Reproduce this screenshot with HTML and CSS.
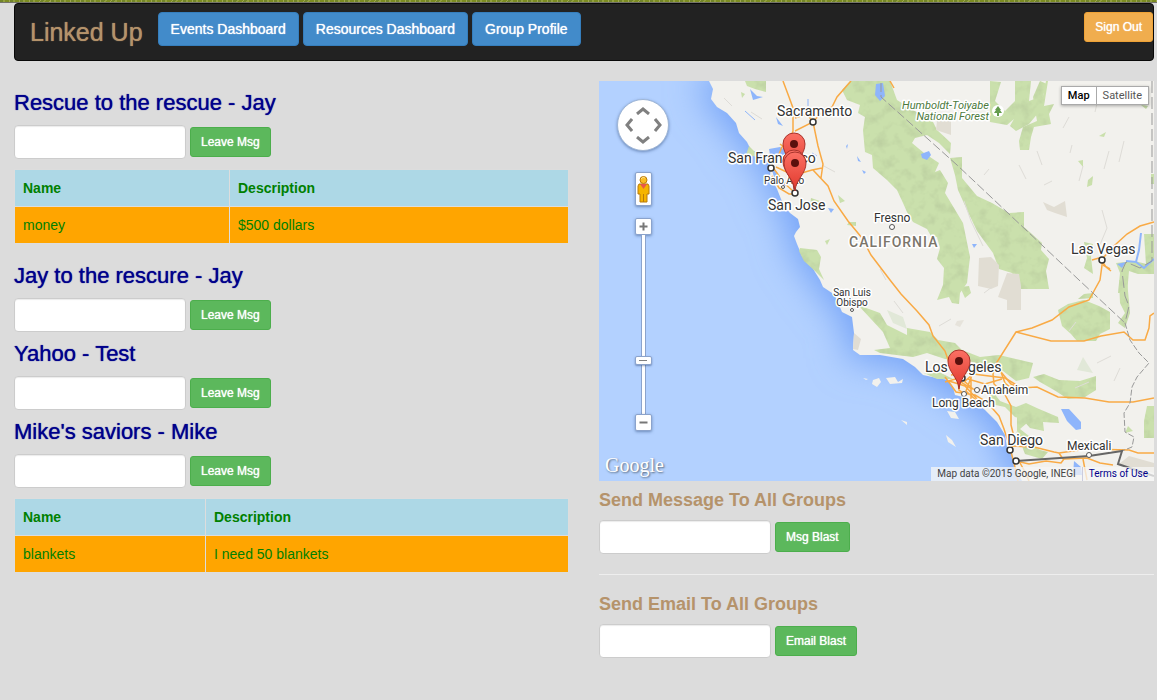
FILE: index.html
```html
<!DOCTYPE html>
<html lang="en">
<head>
<meta charset="utf-8">
<title>Linked Up</title>
<link rel="stylesheet" href="styles.css">
</head>
<body>
<div class="page">
  <nav class="navbar">
    <a class="brand" href="#">Linked Up</a>
    <div class="nav-buttons">
      <button class="btn btn-primary" type="button">Events Dashboard</button>
      <button class="btn btn-primary" type="button">Resources Dashboard</button>
      <button class="btn btn-primary" type="button">Group Profile</button>
    </div>
    <button class="btn btn-small btn-warning" type="button">Sign Out</button>
  </nav>

  <main class="columns">
    <div class="groups">
      <section class="group">
        <h2>Rescue to the rescue - Jay</h2>
        <form class="message-form"><input type="text" aria-label="Message to Rescue to the rescue"><button class="btn btn-small btn-success" type="button">Leave Msg</button></form>
        <table class="needs">
          <colgroup><col class="col-wide"><col></colgroup>
          <thead><tr><th scope="col">Name</th><th scope="col">Description</th></tr></thead>
          <tbody><tr><td>money</td><td>$500 dollars</td></tr></tbody>
        </table>
      </section>
      <section class="group">
        <h2>Jay to the rescure - Jay</h2>
        <form class="message-form"><input type="text" aria-label="Message to Jay to the rescure"><button class="btn btn-small btn-success" type="button">Leave Msg</button></form>
      </section>
      <section class="group">
        <h2>Yahoo - Test</h2>
        <form class="message-form"><input type="text" aria-label="Message to Yahoo"><button class="btn btn-small btn-success" type="button">Leave Msg</button></form>
      </section>
      <section class="group">
        <h2>Mike's saviors - Mike</h2>
        <form class="message-form"><input type="text" aria-label="Message to Mike's saviors"><button class="btn btn-small btn-success" type="button">Leave Msg</button></form>
        <table class="needs">
          <colgroup><col class="col-narrow"><col></colgroup>
          <thead><tr><th scope="col">Name</th><th scope="col">Description</th></tr></thead>
          <tbody><tr><td>blankets</td><td>I need 50 blankets</td></tr></tbody>
        </table>
      </section>
    </div>

    <div class="side">
      <div class="map">
        <svg class="map-canvas" viewBox="0 0 555 400" preserveAspectRatio="xMidYMid slice" role="img" aria-label="Map of California">
          <defs>
            <filter id="soft" x="-20%" y="-20%" width="140%" height="140%"><feGaussianBlur stdDeviation="18"/></filter>
            <filter id="relief" x="0" y="0" width="100%" height="100%">
              <feTurbulence type="fractalNoise" baseFrequency="0.09" numOctaves="3" seed="4"/>
              <feColorMatrix values="0 0 0 0 0.35  0 0 0 0 0.42  0 0 0 0 0.25  0 1.8 0 0 -0.82"/>
              <feComposite operator="in" in2="SourceGraphic"/>
            </filter>
            <linearGradient id="pin" x1="0" y1="0" x2="0" y2="1"><stop offset="0" stop-color="#fb7064"/><stop offset="1" stop-color="#e0382c"/></linearGradient>
            <path id="land" d="M110 0L114 8L112 18L118 26L128 32L137 42L140 52L148 61L152 69L160 72L168 80L172 84L171 95L178 108L182 118L185 125L191 132L199 138L201 146L197 151L195 155L198 163L203 175L212 184L216 191L221 199L224 206L236 214L243 231L253 236L255 252L254 269L261 274L281 274L304 278L316 286L324 294L338 297L349 299L354 306L356 314L364 316L375 321L386 329L398 341L406 354L408 366L413 372L415 386L421 396L423 400H555V0Z"/>
            <g id="forests">
              <path d="M251 0L243 9L248 19L261 24L259 32L266 36L264 49L266 71L273 74L274 87L288 99L298 109L304 122L308 131L314 141L328 148L332 155L338 156L341 167L338 178L345 187L344 204L338 219L350 216L353 222L360 223L361 212L368 202L371 176L364 142L355 127L346 112L349 102L341 89L336 91L340 82L325 72L313 62L316 57L328 54L340 62L351 73L352 62L338 49L334 41L314 29L298 19L291 0Z"/>
              <path d="M351 77L363 76L363 97L378 115L393 122L410 132L425 131L425 146L443 162L442 169L450 178L447 190L450 208L422 208L413 192L400 188L394 172L378 150L368 129L359 109L356 94Z"/>
              <path d="M391 0L402 1L396 20L406 30L416 20L416 0H432L430 20L444 15L447 0H449L445 25L430 43L417 50L411 45L415 38L408 44L391 41Z"/>
              <path d="M434 16L441 0L448 3L440 26L455 23L450 33L452 43L435 46L432 56L430 69L421 69L420 60L424 46L438 40Z"/>
              <path d="M259 224L281 232L288 244L308 254V247L331 251L339 259L356 262L363 269L381 276L400 274L434 282L430 297L417 300L404 290L388 286L370 280L346 278L328 272L314 276L281 272L275 269L291 267L284 251Z"/>
              <path d="M325 292L340 291L354 298L338 298Z"/>
              <path d="M459 229L469 223L485 219L500 225L511 231V248L501 253L497 260H478L472 253L463 245Z"/>
              <path d="M434 296L445 293L460 299L481 300L497 295V309L486 316L469 318L455 309L441 301Z"/>
              <path d="M389 304L401 320L417 326L427 322L440 328L459 336L460 342L444 341L445 350L431 347L423 338L416 336L406 326L392 323Z"/>
              <path d="M418 332L428 342L421 348L430 355L423 360L418 350ZM417 350L425 360L441 369L449 371L443 378L426 373Z"/>
              <path d="M361 206L370 205L372 212L366 217ZM485 213L494 212V217L479 218Z"/>
              <path d="M520 199H528L531 232L526 247L519 242L526 232L521 222ZM548 325H555V357H545V340ZM529 345L534 350L526 352Z"/>
              <path d="M146 0H167V11L156 8L148 5ZM150 65L157 72L166 79L154 75L147 74ZM142 11L146 13L143 17Z"/>
              <path d="M201 167L218 169L222 176L220 188L225 199L216 190L205 180L200 170ZM239 114L246 120L241 122ZM212 117L221 120L217 129L211 126ZM250 141H257V145L248 144ZM226 160L231 158L228 164Z"/>
              <path d="M485 161L494 163L492 176L494 193L485 187L488 177ZM517 182L536 180L547 183L545 153H555V193L539 193L530 190L528 212H519L521 192ZM489 99L494 95L493 104L488 106ZM479 80L484 79V86ZM500 55L507 51L505 56ZM542 24L549 25L547 28ZM552 93H555V103H552ZM413 163L421 162V169L416 170Z"/>
            </g>
            <g id="marker">
              <path d="M0 28C-1 16-11 11-11 0A11 11 0 0 1 11 0C11 11 1 16 0 28Z" fill="url(#pin)" stroke="#a8332b" stroke-width="1"/>
              <circle r="4" fill="#5a100d"/>
            </g>
          </defs>

          <rect width="555" height="400" fill="#b3d1ff"/>
          <use href="#land" fill="#75a3f7" stroke="#75a3f7" stroke-width="14" filter="url(#soft)"/>
          <use href="#land" fill="#f2f1ed"/>
          <use href="#forests" fill="#cae0ac"/>
          <use href="#forests" filter="url(#relief)" opacity="0.4"/>

          <g fill="#e1ddd3">
            <path d="M338 40L352 40V54L337 49ZM380 177L392 176L400 184L399 205L392 208L379 205ZM408 192L420 193L422 205V229H408V219L399 216ZM444 121L455 126L466 120L468 136L456 132L448 129ZM255 252L262 258L259 269L254 268ZM530 375L555 382V392L520 383Z"/>
            <path d="M358 240L365 239L361 246L356 244Z" opacity="0.7"/>
            <path d="M288 229L304 236L308 248L294 242ZM484 276L494 292L478 289Z" fill="#e1e8d8"/>
          </g>
          <g fill="none" stroke="#dedcd7" stroke-width="1">
            <path d="M480 100L484 85M438 70L443 84M510 70L505 88M503 129L508 147L500 166M464 47L470 36M500 14L496 31M370 29L382 24M385 94L390 88M420 84L427 98M473 64L471 72M445 104L453 100M525 60L520 81M385 212L393 206M477 241L470 250M498 282L512 275M476 307L490 301M521 287L515 300M300 155L309 168M281 188L287 199M295 220L304 232M223 84L236 91M152 31L163 38M125 17L133 25M365 120L372 140L384 165M340 245L352 238"/>
          </g>
          <g fill="#f2f1ed">
            <path d="M264 297L269 298L267 299ZM274 299L280 297L282 301L278 306L273 303ZM287 297L296 296L299 301L304 298L303 302L291 303ZM348 330L356 331L360 338L352 337ZM347 354L353 359L357 366L349 361ZM302 339L308 341L308 344Z"/>
          </g>
          <g fill="#8eb5fb">
            <path d="M277 3L284 2L286 15L281 20L276 14ZM322 73L330 70L332 74L328 79L323 77ZM462 328L470 328L482 341V348L477 349L468 340ZM475 380L482 386L483 394H474ZM151 8L158 15L164 16L154 19ZM170 68L181 66L190 71L183 76L171 74ZM172 86L181 96L189 103L185 105L176 99ZM247 65L249 63L248 68ZM258 75L262 81L259 80ZM263 89L267 91L265 93ZM229 127L235 128L232 132ZM177 36L184 45L179 43ZM373 163L378 163L375 167ZM518 183L527 181L523 187Z"/>
            <path d="M542 152L540 169L537 181L527 180M537 181L545 187L555 178" fill="none" stroke="#8eb5fb" stroke-width="2"/>
            <path d="M209 18V25M213 72L218 75M146 30L156 39" fill="none" stroke="#8eb5fb" stroke-width="1"/>
          </g>

          <g fill="none" stroke="#f9aa45" stroke-width="1.5">
            <path d="M184 0L190 16L194 27V50L190 60L183 66M252 0L238 16L233 26L222 32L214 41L196 50M214 41L219 65L224 83L222 97M196 94L213 89L223 87M214 89L229 105L235 120L249 140L263 157L272 174L291 199L302 213L318 230L330 244L334 255L346 270L352 287L360 300L373 308M291 0L295 7M196 37L208 33L214 41"/>
            <path d="M172 84L178 92L184 101L194 110M173 95L180 107L190 113L196 113M183 66L180 73L190 81L195 93M177 86L194 94M186 71L194 80M181 63L189 69"/>
            <path d="M555 141L541 145L528 153L516 164L504 177L501 199L490 219L470 226L453 239L433 247L417 251L398 281L402 291L412 303L422 307L438 306L459 316L486 317L510 321L534 321L555 317"/>
            <path d="M417 251L452 260L485 260L502 255L525 251L534 259L546 259L550 247L551 235L555 232M398 281L394 293L395 303L405 312L412 325L412 344L416 360L411 369M402 291L406 302L412 307"/>
            <path d="M346 296L352 304L357 311L376 314L388 321L400 335L405 348L411 367L415 382L419 400M352 294L367 292L382 294L406 297L421 306M350 300L366 305L378 318M358 291L360 309L366 313M373 294L367 310L379 321M365 301L381 287L391 289M353 289L374 308L394 310M369 298L386 303L403 298M372 288V320M346 301L360 297"/>
            <path d="M413 365L435 366L455 371L460 372L488 368L530 369L539 372L555 372M417 380L430 383L447 380L462 382L465 378L488 377L501 382L514 384M460 372L464 378M420 380L426 391L430 400M484 378L488 399"/>
            <path d="M501 177L507 186L512 190M500 177L493 179M504 184L511 188"/>
          </g>
          <g fill="none" stroke="#999" stroke-width="1">
            <path d="M282 2V16L358 84L480 199L526 242" stroke-dasharray="9 3"/>
            <path d="M553 0V180L541 187L527 181L523 190L526 215L530 225L526 242" stroke-dasharray="12 4"/>
            <path d="M526 242L531 259L540 272L550 282L538 296L533 306L531 322L525 332L526 351L535 356L533 366L523 370" stroke-dasharray="6 2"/>
            <path d="M417 380L490 375L523 370L519 383L555 395" stroke="#666" stroke-width="2"/>
          </g>

          <circle cx="399" cy="30" r="6" fill="#fff"/><path d="M399 25L402 29H401L403 32H400V35H398V32H395L397 29H396Z" fill="#659c4e"/>
          <g fill="#fff" stroke="#333" stroke-width="1.5">
            <circle cx="214" cy="41" r="3"/><circle cx="172" cy="87" r="3"/><circle cx="196" cy="112" r="3"/><circle cx="503" cy="179" r="3"/>
            <circle cx="411" cy="369" r="3"/><circle cx="417" cy="380" r="3"/><circle cx="363" cy="297" r="3"/>
          </g>
          <g fill="#fff" stroke="#555" stroke-width="1">
            <circle cx="293" cy="146" r="2.5"/><circle cx="184" cy="106" r="1.5"/><circle cx="253" cy="229" r="1.5"/><circle cx="365" cy="313" r="2.5"/><circle cx="378" cy="309" r="2.5"/><circle cx="490" cy="374" r="2.5"/>
          </g>

          <g class="label">
            <g class="label-city">
              <text x="178" y="35">Sacramento</text><text x="129" y="82">San Francisco</text><text x="169" y="129">San Jose</text>
              <text x="472" y="173">Las Vegas</text><text x="326" y="291">Los Angeles</text><text x="381" y="364">San Diego</text>
            </g>
            <g class="label-town">
              <text x="275" y="141">Fresno</text><text x="333" y="326">Long Beach</text><text x="382" y="313">Anaheim</text><text x="468" y="369">Mexicali</text>
            </g>
            <g class="label-small">
              <text x="165" y="103">Palo Alto</text><text x="253" y="215" text-anchor="middle">San Luis</text><text x="253" y="225" text-anchor="middle">Obispo</text>
            </g>
            <text class="label-state" x="250" y="166">CALIFORNIA</text>
            <g class="label-forest"><text x="390" y="28" text-anchor="end">Humboldt-Toiyabe</text><text x="390" y="39" text-anchor="end">National Forest</text></g>
          </g>
          <use href="#marker" x="195" y="63"/><use href="#marker" x="195" y="80"/><use href="#marker" x="196" y="82"/><use href="#marker" x="360" y="280"/>
        </svg>

        <div class="map-controls">
          <div class="pan">
            <button class="pan-up" type="button" aria-label="Pan up"><svg viewBox="0 0 14 9"><path d="M1 8L7 3L13 8"/></svg></button>
            <button class="pan-left" type="button" aria-label="Pan left"><svg viewBox="0 0 9 14"><path d="M8 1L3 7L8 13"/></svg></button>
            <button class="pan-right" type="button" aria-label="Pan right"><svg viewBox="0 0 9 14"><path d="M1 1L6 7L1 13"/></svg></button>
            <button class="pan-down" type="button" aria-label="Pan down"><svg viewBox="0 0 14 9"><path d="M1 1L7 6L13 1"/></svg></button>
          </div>
          <button class="control pegman" type="button" aria-label="Street view">
            <svg viewBox="0 0 15 32"><path d="M3 11H12L13 13V21H11V29H4V21H2V13Z" fill="#f5b400" stroke="#b97a0b"/><path d="M7.500 21V29" stroke="#b97a0b"/><path d="M4 11H11L7.500 16Z" fill="#e8584a"/><circle cx="7.500" cy="7" r="3.500" fill="#fbbd22" stroke="#b97a0b"/><path d="M5 6Q7 3 9 5" fill="none" stroke="#ffe08a"/></svg>
          </button>
          <div class="zoom">
            <button class="control" type="button" aria-label="Zoom in"><svg viewBox="0 0 15 15"><path d="M7.500 3.500V11.500M3.500 7.500H11.500"/></svg></button>
            <input class="zoom-range" type="range" min="0" max="21" value="6" aria-label="Zoom level">
            <button class="control" type="button" aria-label="Zoom out"><svg viewBox="0 0 15 15"><path d="M3.500 7.500H11.500"/></svg></button>
          </div>
        </div>
        <div class="map-type"><button class="active" type="button">Map</button><button type="button">Satellite</button></div>
        <span class="map-logo">Google</span>
        <div class="map-credit"><span>Map data ©2015 Google, INEGI</span><a href="#">Terms of Use</a></div>
      </div>

      <h3><label for="blast">Send Message To All Groups</label></h3>
      <form class="message-form"><input id="blast" type="text"><button class="btn btn-small btn-success" type="button">Msg Blast</button></form>
      <hr>
      <h3 class="after-rule"><label for="email">Send Email To All Groups</label></h3>
      <form class="message-form"><input id="email" type="text"><button class="btn btn-small btn-success" type="button">Email Blast</button></form>
    </div>
  </main>
</div>
</body>
</html>
```
FILE: styles.css
```css
* { box-sizing: border-box; }

body {
  margin: 0;
  background: #dcdcdc;
  color: #333;
  font: 14px/20px "Liberation Sans", Arial, sans-serif;
}

body::before {
  content: "";
  display: block;
  height: 2px;
  border-bottom: 1px solid #74746c;
  background: repeating-linear-gradient(100deg, #72852a 0 3px, #93a040 3px 5px, #7c8c22 5px 9px, #a0a850 9px 10px);
}

.page { padding: 0 3px 20px 14px; }

.navbar {
  display: flex;
  align-items: flex-start;
  min-height: 58px;
  padding: 8px 0 0 15px;
  border: 1px solid #080808;
  border-radius: 4px;
  background: #222;
}

.brand {
  margin-right: 15px;
  color: #b5936b;
  font-size: 25px;
  line-height: 40px;
  text-decoration: none;
  text-shadow: 0 0 1px currentColor;
}

.nav-buttons { display: flex; flex: 1; gap: 4px; }

.btn {
  flex: none;
  padding: 6px 12px;
  border: 1px solid;
  border-radius: 4px;
  color: #fff;
  font: inherit;
  text-shadow: 0 0 1px #fff;
}

.btn-small { padding: 5px 10px; border-radius: 3px; font-size: 12px; line-height: 18px; }
.btn-primary { background: #428bca; border-color: #357ebd; }
.btn-warning { background: #f0ad4e; border-color: #eea236; }
.btn-success { background: #5cb85c; border-color: #4cae4c; }

.columns {
  display: grid;
  grid-template-columns: minmax(0, 1fr) minmax(0, 1fr);
  gap: 30px;
  margin-top: 20px;
}

.group { padding-top: 10px; }

h2 {
  margin: 0 0 10px;
  color: #00008b;
  font-size: 22px;
  font-weight: 400;
  line-height: 24px;
  text-shadow: 0 0 1px currentColor;
}

h3 {
  margin: 10px 0;
  color: #b5936b;
  font-size: 18px;
  font-weight: 700;
  line-height: 19px;
}

h3.after-rule { margin-top: 0; }

.message-form { display: flex; align-items: center; gap: 4px; }

.message-form input {
  width: 172px;
  height: 34px;
  padding: 6px 12px;
  border: 1px solid #ccc;
  border-radius: 4px;
  background: #fff;
  font: inherit;
  box-shadow: inset 0 1px 1px rgba(0, 0, 0, .08);
}

.needs {
  width: 100%;
  margin: 10px 0;
  border-collapse: collapse;
  table-layout: fixed;
  color: green;
  text-align: left;
}

.needs th, .needs td { padding: 8px; border: 1px solid #ddd; }
.needs th { background: #add8e6; }
.needs td { background: orange; }
.col-wide { width: 215px; }
.col-narrow { width: 191px; }

hr { margin: 20px 0; border: 0; border-top: 1px solid #eee; }

/* Map */
.map { position: relative; height: 400px; overflow: hidden; font-family: Roboto, sans-serif; }
.map-canvas { display: block; width: 100%; height: 100%; }

.label { fill: #333; stroke: #fff; stroke-width: 3px; stroke-linejoin: round; paint-order: stroke; }
.label-city { font-size: 14px; }
.label-town { font-size: 12px; }
.label-small { font-size: 10px; }
.label-state { fill: #7b756a; font-size: 14px; font-weight: 500; letter-spacing: 1px; }
.label-forest { fill: #4c7a3d; font-size: 11px; font-style: italic; }

.map-controls {
  position: absolute;
  top: 18px;
  left: 18px;
  display: flex;
  flex-direction: column;
  align-items: center;
}

.map-controls button { padding: 0; background: none; border: 0; }
.map-controls svg { display: block; width: 100%; height: 100%; fill: none; }

.pan {
  display: grid;
  grid-template: "a up b" 14px "left c right" 1fr "d down e" 14px / 14px 1fr 14px;
  place-items: center;
  width: 52px;
  height: 52px;
  padding: 3px;
  border: 1px solid #9fb6d6;
  border-radius: 50%;
  background: #fff;
  box-shadow: 0 1px 3px rgba(40, 70, 120, .5);
}

.pan path { stroke: #808080; stroke-width: 3px; }
.pan-up { grid-area: up; width: 14px; height: 9px; }
.pan-down { grid-area: down; width: 14px; height: 9px; }
.pan-left { grid-area: left; width: 9px; height: 14px; }
.pan-right { grid-area: right; width: 9px; height: 14px; }

.map-controls .control {
  width: 17px;
  height: 17px;
  border: 1px solid #8ba3cc;
  border-radius: 2px;
  background: #fff;
  box-shadow: 0 1px 3px rgba(40, 70, 120, .5);
}

.map-controls .pegman { height: 34px; margin: 21px 0 12px; }
.zoom { display: flex; flex-direction: column; align-items: center; }
.zoom .control path { stroke: #777; stroke-width: 2px; }

.zoom-range {
  width: 17px;
  height: 179px;
  margin: 0;
  appearance: none;
  background: linear-gradient(90deg, transparent 6px, #8ba3cc 6px 7px, #fff 7px 10px, #8ba3cc 10px 11px, transparent 11px);
  direction: rtl;
  writing-mode: vertical-lr;
}

.zoom-range::-webkit-slider-thumb {
  width: 17px;
  height: 9px;
  appearance: none;
  border: 1px solid #8ba3cc;
  border-radius: 2px;
  background: linear-gradient(#808080, #808080) center / 8px 1px no-repeat #fff;
  box-shadow: 0 1px 2px rgba(40, 70, 120, .5);
}

.map-type {
  position: absolute;
  top: 5px;
  right: 5px;
  display: flex;
  border: 1px solid #aaa;
  background: #fff;
  box-shadow: 0 1px 3px rgba(0, 0, 0, .3);
}

.map-type button {
  padding: 0 6px;
  border: 0;
  background: #fff;
  color: #555;
  font: 11px/17px Roboto, sans-serif;
}

.map-type .active { border-right: 1px solid #aaa; color: #000; font-weight: 500; }

.map-logo {
  position: absolute;
  bottom: 4px;
  left: 6px;
  color: #fff;
  font: 20px/24px "Liberation Serif", serif;
  text-shadow: 1px 1px 2px #567;
}

.map-credit {
  position: absolute;
  right: 0;
  bottom: 0;
  display: flex;
  background: rgba(245, 245, 245, .75);
  color: #444;
  font-size: 10px;
  line-height: 14px;
}

.map-credit span { padding: 0 6px; border-right: 1px solid #ccd; }
.map-credit a { padding: 0 6px; color: #00008b; text-decoration: none; }
```
